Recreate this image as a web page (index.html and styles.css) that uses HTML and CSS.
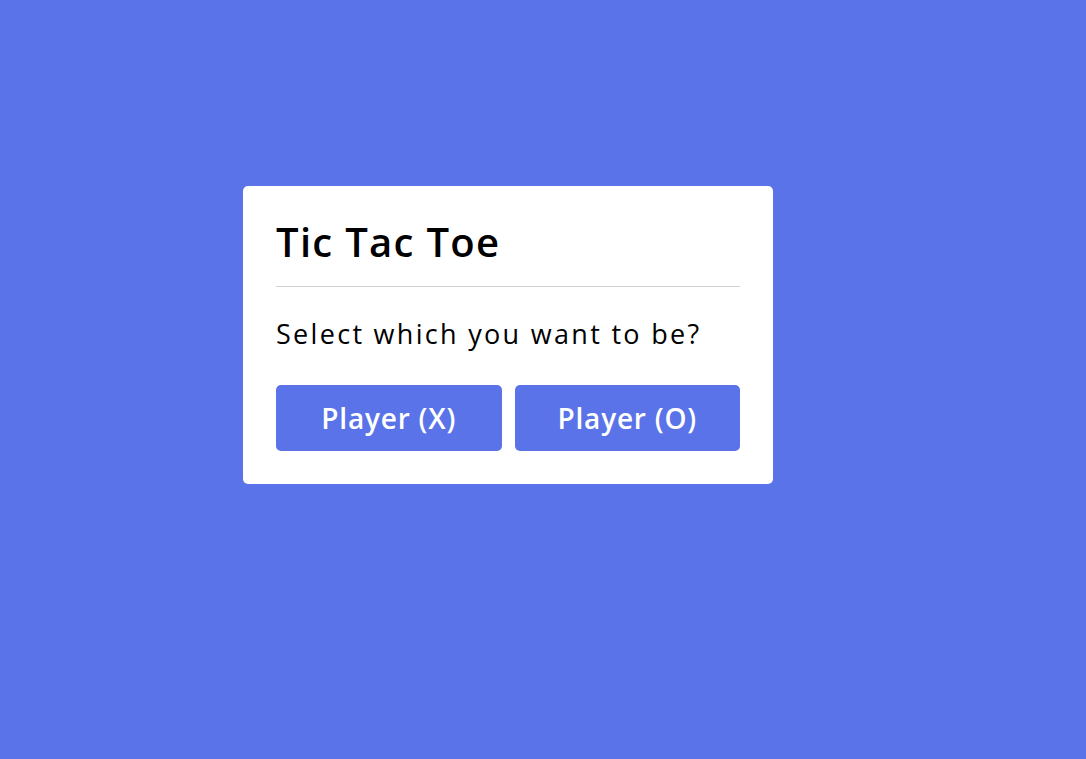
FILE: index.html
```html
<!DOCTYPE html>
<html>
<head>
<meta charset="utf-8">
<link rel="stylesheet" href="styles.css">
</head>
<body>
<div class="select-box">
  <header class="box-title">Tic Tac Toe</header>
  <div class="content">
    <p class="question">Select which you want to be?</p>
    <div class="options">
      <button class="player-btn">Player (X)</button>
      <button class="player-btn">Player (O)</button>
    </div>
  </div>
</div>
</body>
</html>
```
FILE: styles.css
```css
html, body {
  margin: 0;
  padding: 0;
}
body {
  background: #5a73e8;
  width: 1086px;
  height: 759px;
  overflow: hidden;
  font-family: "Open Sans", "Liberation Sans", sans-serif;
}
.select-box {
  box-sizing: border-box;
  width: 530px;
  margin: 186px 0 0 243px;
  background: #fff;
  border-radius: 5px;
  padding: 29px 33px 33px;
}
.box-title {
  display: block;
  font-size: 40px;
  font-weight: 600;
  line-height: 54px;
  letter-spacing: 1.3px;
  color: #000;
  padding-bottom: 17px;
  border-bottom: 1px solid #d3d3d3;
}
.question {
  margin: 29px 0 33px;
  font-size: 27px;
  font-weight: 400;
  line-height: 36px;
  letter-spacing: 2.3px;
  color: #000;
}
.options {
  display: flex;
  gap: 13px;
}
.player-btn {
  flex: 1;
  height: 66px;
  border: none;
  border-radius: 5px;
  background: #5a73e8;
  color: #fff;
  font-family: inherit;
  font-size: 28px;
  font-weight: 600;
  letter-spacing: 0.8px;
  padding: 0;
}
```
